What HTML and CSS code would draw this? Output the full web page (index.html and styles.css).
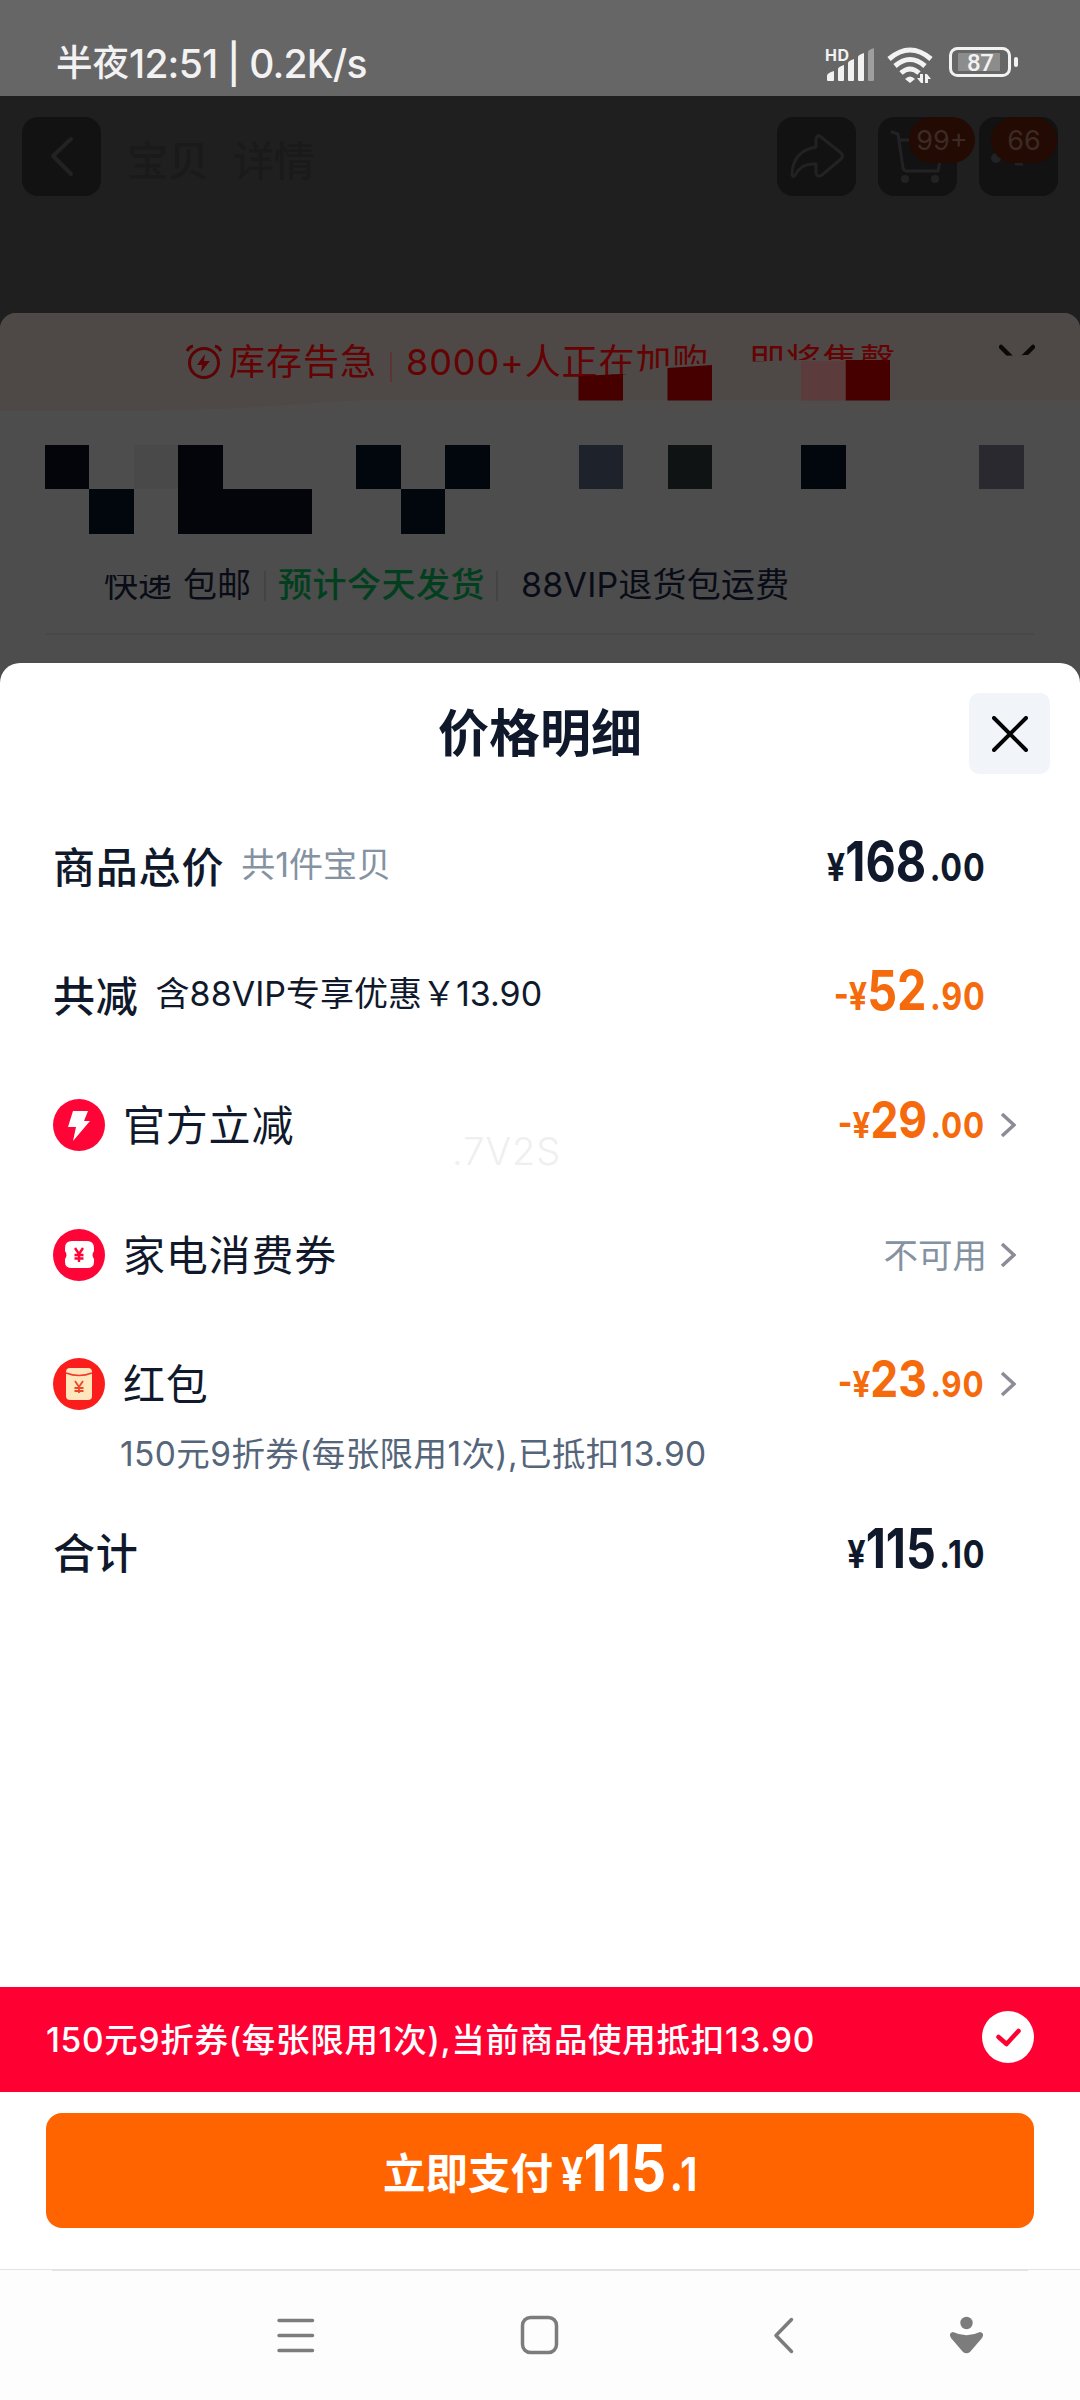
FILE: index.html
```html
<!DOCTYPE html>
<html lang="zh-CN">
<head>
<meta charset="utf-8">
<title>价格明细</title>
<link rel="stylesheet" href="styles.css">
</head>
<body>
<div class="screen">
  <header class="status">
    <span class="status-time"><span class="t-cn">半夜</span><span class="t-la">12:51 | 0.2K/s</span></span>
    <svg class="status-icons" width="200" height="44" viewBox="0 0 200 44">
      <text x="0" y="18" class="hd" textLength="24">HD</text>
      <g fill="#f2f2f2">
        <path d="M2 37v-4q0-3 7-5v9q0 1-1 1H3q-1 0-1-1zM13 37V26q0-2 6-4v15q0 1-1 1h-4q-1 0-1-1zM23 37V20q0-2 6-4v21q0 1-1 1h-4q-1 0-1-1zM33 37V14q0-2 6-4v27q0 1-1 1h-4q-1 0-1-1z"/>
        <path opacity=".4" d="M43 37V9q0-2 6-4v32q0 1-1 1h-4q-1 0-1-1z"/>
        <path d="M80 36q5-5 10 0l-5 4z"/>
        <path d="M98 31v9h-2l-4-5h3v-4zM100 40v-9h2l4 5h-3v4z"/>
      </g>
      <g fill="none" stroke="#f2f2f2" stroke-width="5">
        <path d="M64 16q21-18 42 0M70 23q15-13 30 0M76 30q9-8 18 0"/>
      </g>
      <rect x="133" y="10" width="42" height="18" fill="#8c8c8c"/>
      <rect x="125.500" y="5.500" width="59" height="27" rx="7" fill="none" stroke="#f2f2f2" stroke-width="3"/>
      <rect x="189" y="14" width="4" height="10" rx="2" fill="#f2f2f2"/>
      <text x="142" y="28" class="batt" textLength="27">87</text>
    </svg>
  </header>

  <div class="topbar">
    <div class="tile"><svg width="79" height="79" viewBox="0 0 79 79"><path class="dim" stroke-width="4" d="M49 22 31 39 49 57"/></svg></div>
    <div class="topbar-title"><span>宝贝</span><span>详情</span></div>
    <div class="tile"><svg width="79" height="79" viewBox="0 0 79 79"><path class="dim" stroke-width="3" d="M39 30V22q1-5 5-2L64 36q3 3 0 6L45 58q-5 3-6-2V47Q24 46 19 57q-3 5-4 0 1-23 24-27z"/></svg></div>
    <div class="tile"><svg width="79" height="79" viewBox="0 0 79 79"><path class="dim" stroke-width="3" d="M14 15l6 2 5 34q1 3 4 3h31l2-10M22 23h14"/><circle cx="27" cy="62" r="4" fill="#222225"/><circle cx="57" cy="62" r="4" fill="#222225"/></svg><span class="badge">99+</span></div>
    <div class="tile"><svg width="79" height="79" viewBox="0 0 79 79"><circle cx="17" cy="41" r="5" fill="#222225"/><path d="M36 47h8" stroke="#222225" stroke-width="3"/></svg><span class="badge badge-r">66</span></div>
  </div>

  <section class="under">
    <div class="banner">
      <svg class="alarm" width="36" height="36" viewBox="0 0 36 36"><g fill="none" stroke="#5c0305" stroke-width="3"><circle cx="18" cy="19" r="14.500"/><path d="M1 7q2-4 6-5M29 2q4 1 6 5"/></g><path fill="#5c0305" d="M19 10l-8 11h5l-1 7 9-11h-6z"/></svg>
      <span class="b1">库存告急</span><i class="bar"></i><span class="b2">8000+人正在加购</span><span class="b3">即将售罄</span>
      <svg class="down" width="36" height="22" viewBox="0 0 36 22"><path d="M2 3l16 16L34 3" fill="none" stroke="#0a0908" stroke-width="4.500" stroke-linecap="round"/></svg>
      <svg class="veil" width="1080" height="98" viewBox="0 0 1080 98">
        <path fill="#4e4946" d="M540 66l83-4 44-9 45-3 88-3 96 0 130-5 54-1v57H540z"/>
        <path fill="#4e4d4c" d="M150 98l90-3 120-8h720v11z"/>
        <path fill="#470000" d="M578.500 63l44.500-2v26.500h-44.500zM667.500 55l44.500-3v35.500h-44.500zM845.500 47h44.500v40.500h-44.500z"/>
        <path fill="#5b3b3b" d="M801 48h44.500v39.500H801z"/>
      </svg>
    </div>
    <div class="mosaic">
      <i class="m c1 a"></i><i class="m c3 b"></i><i class="m c4 a"></i><i class="m c8 d"></i><i class="m c10 d"></i><i class="m c13 e"></i><i class="m c15 f"></i><i class="m c18 d"></i><i class="m c22 g"></i>
      <i class="m c2 r2 d"></i><i class="m c4 r2 w3 a"></i><i class="m c9 r2 d"></i>
    </div>
    <div class="ship">
      <span class="s1">快递</span><span class="s1b">包邮</span><i class="bar"></i><span class="s2">预计今天发货</span><i class="bar"></i><span class="s3">88VIP退货包运费</span>
    </div>
  </section>

  <main class="sheet">
    <div class="sheet-head">
      <h1>价格明细</h1>
      <div class="close"><svg width="36" height="36" viewBox="0 0 36 36"><path d="M2 2l32 32M34 2 2 34" stroke="#050505" stroke-width="4" stroke-linecap="round"/></svg></div>
    </div>

    <div class="row">
      <span class="label strong">商品总价</span><span class="note grey">共1件宝贝</span>
      <span class="price"><small>¥</small>168<small class="dec">.00</small></span>
    </div>
    <div class="row">
      <span class="label strong">共减</span><span class="note">含88VIP专享优惠￥13.90</span>
      <span class="price off"><small>-¥</small>52<small class="dec">.90</small></span>
    </div>
    <div class="row">
      <svg class="ico" width="52" height="52" viewBox="0 0 52 52"><circle cx="26" cy="26" r="26" fill="#ff0436"/><path fill="#fff" d="M20 12h15l-4 10h6L20 42l3-14h-8z"/></svg>
      <span class="label">官方立减</span>
      <span class="price off item"><small>-¥</small>29<small class="dec">.00</small></span>
      <svg class="chev" width="16" height="26" viewBox="0 0 16 26"><path d="M2 2l12 11L2 24"/></svg>
    </div>
    <div class="row">
      <svg class="ico" width="52" height="52" viewBox="0 0 52 52"><circle cx="26" cy="26" r="26" fill="#ff0436"/><path fill="#fff" d="M19 12h15q7 0 7 7v3q-3 4 0 8v3q0 6-7 6H19q-7 0-7-6v-3q3-4 0-8v-3q0-7 7-7z"/><path d="M22 19l4 6 4-6M21.500 26h9M21.500 29.500h9M26 25v8" stroke="#ff0436" stroke-width="2.400" fill="none"/></svg>
      <span class="label">家电消费券</span>
      <span class="na">不可用</span>
      <svg class="chev" width="16" height="26" viewBox="0 0 16 26"><path d="M2 2l12 11L2 24"/></svg>
    </div>
    <div class="row">
      <svg class="ico" width="52" height="52" viewBox="0 0 52 52"><circle cx="26" cy="26" r="26" fill="#fb1c1c"/><rect x="13" y="10" width="26" height="32" rx="4" fill="#ffe6bd"/><path d="M13 15q13 5 26 0" stroke="#f23a2a" stroke-width="1.500" fill="none"/><path d="M22 23l4 6 4-6M21.500 30h9M21.500 33h9M26 29v6" stroke="#f04428" stroke-width="1.800" fill="none"/></svg>
      <span class="label">红包</span>
      <span class="price off item"><small>-¥</small>23<small class="dec">.90</small></span>
      <svg class="chev" width="16" height="26" viewBox="0 0 16 26"><path d="M2 2l12 11L2 24"/></svg>
    </div>
    <p class="detail">150元9折券(每张限用1次),已抵扣13.90</p>
    <div class="row total">
      <span class="label strong">合计</span>
      <span class="price"><small>¥</small>115<small class="dec">.10</small></span>
    </div>
    <span class="mark">.7V2S</span>
  </main>

  <div class="coupon">
    <span class="coupon-text">150元9折券(每张限用1次),当前商品使用抵扣13.90</span>
    <svg width="52" height="52" viewBox="0 0 52 52"><circle cx="26" cy="26" r="26" fill="#fff"/><path d="M16.500 26l8 7L36.500 20" fill="none" stroke="#ff0033" stroke-width="4.500" stroke-linecap="round" stroke-linejoin="round"/></svg>
  </div>
  <div class="pay-wrap"><button class="pay"><span class="pay-cn">立即支付</span><span class="price pay-num"><small>¥</small>115<small class="dec">.1</small></span></button></div>

  <nav class="nav">
    <svg width="1080" height="130" viewBox="0 2 1080 130" fill="none" stroke="#7c7c7c" stroke-width="3.500" stroke-linecap="round">
      <path d="M279 52.500h33.500M279 67.500h33.500M279 82.500h33.500"/>
      <rect x="522.500" y="49.500" width="34" height="35" rx="8"/>
      <path d="M791.500 51.500 776 67.500l15.500 16" stroke-linejoin="round"/>
      <circle cx="966.500" cy="55" r="6.200" fill="#7c7c7c" stroke="none"/>
      <path d="M953 64q13.500 6.500 27 0 5 1 2 6L970 84q-3.500 2.500-7 0L951 70q-3-5 2-6z" fill="#7c7c7c" stroke="none"/>
    </svg>
  </nav>
</div>
</body>
</html>
```
FILE: styles.css
```css
* { box-sizing: border-box; }
body {
  margin: 0;
  background: #fff;
  font-family: Inter, "Noto Sans CJK SC", sans-serif;
  color: #10192b;
}
.screen {
  width: 1080px;
  height: 2400px;
  display: flex;
  flex-direction: column;
  background: #1f1f1f;
  overflow: hidden;
}
span, h1, p { white-space: nowrap; }
svg { display: block; flex: none; }

/* status bar */
.status {
  height: 96px;
  flex: none;
  background: #666;
  display: flex;
  justify-content: space-between;
  padding: 43px 55px 0 56px;
  color: #f2f2f2;
}
.status-time { display: flex; line-height: 40px; font-weight: 500; }
.t-cn { font-size: 36.500px; }
.t-la { font-size: 39px; letter-spacing: -.8px; margin-top: 1px; }
.hd { font: 700 16px Inter, sans-serif; fill: #f2f2f2; }
.batt { font: 500 24px Roboto, sans-serif; fill: #f2f2f2; }

/* dimmed header */
.topbar {
  height: 217px;
  flex: none;
  display: flex;
  gap: 22px;
  padding: 21px 22px 0;
}
.tile {
  position: relative;
  width: 79px;
  height: 79px;
  border-radius: 16px;
  background: #121212;
}
.dim { fill: none; stroke: #222225; stroke-linecap: round; stroke-linejoin: round; }
.topbar-title {
  flex: 1;
  display: flex;
  gap: 24px;
  padding-left: 4px;
  font-size: 41px;
  font-weight: 500;
  line-height: 88px;
  color: #1a1a1a;
}
.badge {
  position: absolute;
  left: 31px;
  top: 0;
  width: 66px;
  height: 46px;
  border-radius: 23px;
  background: #230a02;
  color: #3c2a25;
  font-size: 27px;
  line-height: 47px;
  text-align: center;
}
.badge-r { left: 12px; }

/* dimmed product sheet */
.under {
  height: 370px;
  flex: none;
  margin-bottom: -20px;
  border-radius: 16px 16px 0 0;
  background: #4d4d4d;
  overflow: hidden;
}
.banner {
  position: relative;
  height: 98px;
  padding: 25px 45px 0 186px;
  display: flex;
  background: #4e4946;
  color: #640204;
  font-size: 36px;
  line-height: 48px;
}
.alarm { margin: 6px 7px 0 0; }
.b1 { letter-spacing: 1px; width: 161px; }
.bar { flex: none; width: 2px; height: 30px; background: #463c3b; }
.banner .bar { margin: 14px 14px 0 0; background: #5b3433; }
.b2 { width: 343px; letter-spacing: .9px; }
.b3 { flex: 1; letter-spacing: .8px; }
.down { margin-top: 6px; }
.veil { position: absolute; left: 0; top: 0; }
.mosaic {
  height: 123px;
  padding: 33.500px 0 0 44.500px;
  display: grid;
  grid-template-columns: repeat(22, 44.500px);
  grid-template-rows: 44.500px 44.500px;
}
.m { grid-row: 1; }
.r2 { grid-row: 2; }
.c1 { grid-column: 1; }
.c2 { grid-column: 2; }
.c3 { grid-column: 3; }
.c4 { grid-column: 4; }
.c8 { grid-column: 8; }
.c9 { grid-column: 9; }
.c10 { grid-column: 10; }
.c13 { grid-column: 13; }
.c15 { grid-column: 15; }
.c18 { grid-column: 18; }
.c22 { grid-column: 22; }
.w3 { grid-column: 4 / span 3; }
.a { background: #04050b; }
.b { background: #494949; }
.d { background: #02060d; }
.e { background: #1e222b; }
.f { background: #101314; }
.g { background: #2a292f; }
.ship {
  height: 101px;
  margin: 0 46px;
  padding: 28px 0 0 58px;
  border-bottom: 2px solid #484848;
  display: flex;
  font-size: 34px;
  line-height: 46px;
  color: #090c16;
}
.s1 { clip-path: inset(13px 0 0 0); width: 79px; }
.s1b { width: 81px; }
.ship .bar { margin-top: 9px; background: #444; }
.s2 { width: 230px; padding-left: 12px; color: #023f1e; font-weight: 500; letter-spacing: .5px; }
.s3 { padding-left: 23px; letter-spacing: .2px; }

/* price sheet */
.sheet {
  position: relative;
  height: 1324px;
  flex: none;
  border-radius: 20px 20px 0 0;
  background: #fff;
}
.sheet-head {
  height: 140px;
  padding: 30px 30px 0;
  display: grid;
  grid-template-columns: 81px 1fr 81px;
}
h1 {
  grid-column: 2;
  margin: 0;
  text-align: center;
  font-size: 51px;
  line-height: 82px;
  font-weight: 700;
}
.close {
  width: 81px;
  height: 81px;
  border-radius: 10px;
  background: #f1f5f9;
  display: grid;
  place-items: center;
}
.row {
  height: 129.300px;
  display: flex;
  align-items: center;
  padding: 0 64px 0 53px;
}
.ico { margin: -2px 18px 0 0; }
.label { font-size: 42px; letter-spacing: .8px; line-height: 60px; }
.strong { font-weight: 500; }
.note { margin: -5px 0 0 17px; font-size: 34px; line-height: 50px; }
.grey { color: #8492a2; }
.price {
  margin-left: auto;
  margin-right: 31px;
  margin-top: -7px;
  font: 700 55px/60px Inter, sans-serif;
  transform: scaleX(.85);
  transform-origin: right center;
}
.price small { font-size: 38px; font-weight: 700; }
.price .dec { margin-left: 4px; letter-spacing: 1px; margin-right: -1px; }
.price.item { font-size: 51px; transform: scaleX(.87); }
.item small { font-size: 36px; }
.off { color: #f56a0c; }
.chev { margin: -2px 0 0 -15px; fill: none; stroke: #8b8c95; stroke-width: 3.500; }
.na { margin-left: auto; margin-right: 28px; margin-top: -5px; font-size: 34.500px; color: #8492a2; }
.detail {
  margin: -20px 0 0 120px;
  height: 60px;
  line-height: 50px;
  font-size: 33.500px;
  letter-spacing: .4px;
  color: #55657a;
}
.mark {
  position: absolute;
  left: 452px;
  top: 464px;
  font-size: 38px;
  font-weight: 300;
  letter-spacing: 1px;
  line-height: 48px;
  color: #efefef;
}

/* bottom actions */
.coupon {
  height: 105px;
  flex: none;
  padding: 0 46px 5px;
  display: flex;
  justify-content: space-between;
  align-items: center;
  background: #ff0033;
  color: #fff;
  font-size: 33.500px;
  font-weight: 500;
  letter-spacing: .7px;
}
.pay-wrap { height: 177px; flex: none; padding: 21px 46px 0; background: #fff; }
.pay {
  width: 988px;
  height: 115px;
  border: 0;
  border-radius: 16px;
  background: #ff6400;
  color: #fff;
  display: flex;
  align-items: center;
  padding: 0 0 0 337px;
  font-family: inherit;
}
.pay-cn { font-size: 42.500px; font-weight: 700; }
.pay-num { margin: 0 0 0 8px; transform: scaleX(.86); transform-origin: left center; font-size: 64px; }
.pay-num small { font-size: 46px; }
.nav {
  height: 131px;
  flex: none;
  background: linear-gradient(#e3e3e3, #e3e3e3) 52px 0 / 976px 1px no-repeat, #fdfdfd;
  border-top: 1px solid #e3e3e3;
}
```
